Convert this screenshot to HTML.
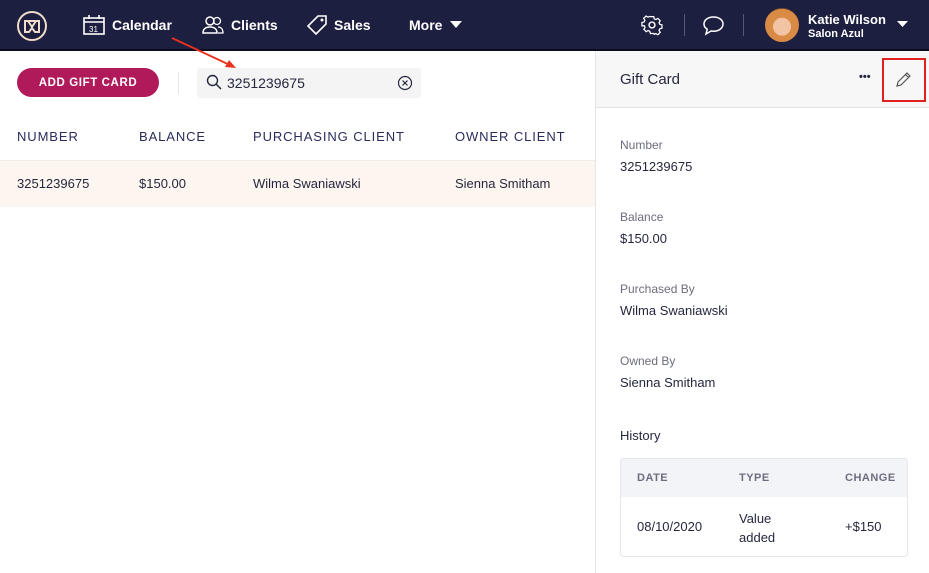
<!DOCTYPE html>
<html><head><meta charset="utf-8"><style>
*{box-sizing:border-box;margin:0;padding:0}
body{width:929px;height:573px;overflow:hidden;background:#fff;font-family:"Liberation Sans",sans-serif;color:#25273e;position:relative}
.nav{position:absolute;left:0;top:0;width:929px;height:51px;background:#1d1f40;border-bottom:2px solid #0c0d1c}
.nav .t{position:absolute;color:#fff;font-size:14px;font-weight:bold;top:17px}
.abs{position:absolute}
.hdr{position:absolute;top:129px;font-size:13px;letter-spacing:.9px;color:#2a2c5a}
.cell{position:absolute;top:176px;font-size:13px;color:#25273e}
.lbl{position:absolute;left:620px;font-size:12px;color:#6b6d7c}
.val{position:absolute;left:620px;font-size:13px;color:#25273e}
</style></head><body>
<div class="nav">
 <svg class="abs" style="left:16px;top:10px" width="32" height="32" viewBox="0 0 32 32"><circle cx="16" cy="16" r="14" fill="none" stroke="#f0dcc8" stroke-width="2"/><path d="M9 11h14v11h-4l-3-4-3 4H9z M12 11l4 6 4-6" fill="none" stroke="#f0dcc8" stroke-width="2"/></svg>
 <svg class="abs" style="left:83px;top:15px" width="22" height="20" viewBox="0 0 22 20"><rect x="1" y="3" width="20" height="16" fill="none" stroke="#fff" stroke-width="1.6"/><line x1="1" y1="7" x2="21" y2="7" stroke="#fff" stroke-width="1.4"/><line x1="6" y1="0" x2="6" y2="4" stroke="#fff" stroke-width="1.6"/><line x1="16" y1="0" x2="16" y2="4" stroke="#fff" stroke-width="1.6"/><text x="6" y="17" font-size="8" fill="#fff" font-family="Liberation Sans">31</text></svg>
 <div class="t" style="left:112px">Calendar</div>
 <svg class="abs" style="left:202px;top:16px" width="22" height="18" viewBox="0 0 22 18"><circle cx="8" cy="5" r="4" fill="none" stroke="#fff" stroke-width="1.5"/><path d="M1 17c0-4 3-6 7-6s7 2 7 6z" fill="none" stroke="#fff" stroke-width="1.5"/><circle cx="15" cy="5" r="3.5" fill="none" stroke="#fff" stroke-width="1.3"/><path d="M16 11c3 0 5 2 5 6h-5" fill="none" stroke="#fff" stroke-width="1.3"/></svg>
 <div class="t" style="left:231px">Clients</div>
 <svg class="abs" style="left:306px;top:14px" width="22" height="22" viewBox="0 0 22 22"><path d="M12 2h8v8L10 20 2 12z" fill="none" stroke="#fff" stroke-width="1.6"/><circle cx="16" cy="6" r="1.5" fill="#fff"/></svg>
 <div class="t" style="left:334px">Sales</div>
 <div class="t" style="left:409px">More</div>
 <svg class="abs" style="left:450px;top:21px" width="12" height="8"><path d="M0 0h12L6 7z" fill="#fff"/></svg>
 <svg class="abs" style="left:641px;top:14px" width="22" height="22" viewBox="0 0 24 24"><circle cx="12" cy="12" r="3.2" fill="none" stroke="#fff" stroke-width="1.6"/><path d="M10 2h4l.6 2.6 2 .9 2.3-1.4 2.8 2.8-1.4 2.3.9 2 2.6.6v4l-2.6.6-.9 2 1.4 2.3-2.8 2.8-2.300-1.4-2 .9L14 22h-4l-.6-2.6-2-.9-2.3 1.4-2.8-2.8 1.4-2.3-.9-2L0 13v-4l2.6-.6.9-2-1.4-2.3 2.8-2.8 2.3 1.4 2-.9z" fill="none" stroke="#fff" stroke-width="1.5" transform="translate(1 1) scale(.92)"/></svg>
 <div class="abs" style="left:684px;top:14px;width:1px;height:22px;background:#555878"></div>
 <svg class="abs" style="left:702px;top:15px" width="23" height="21" viewBox="0 0 23 21"><path d="M11.5 2C6 2 2 5 2 9c0 2.2 1.2 4 3.2 5.2L4 19l5-3c.8.1 1.6.2 2.5.2 5.5 0 9.5-3.2 9.5-7.2S17 2 11.5 2z" fill="none" stroke="#fff" stroke-width="1.5"/></svg>
 <div class="abs" style="left:743px;top:14px;width:1px;height:22px;background:#555878"></div>
 <div class="abs" style="left:765px;top:8px;width:34px;height:34px;border-radius:50%;background:radial-gradient(circle at 50% 55%,#f3c4a4 0 35%,#d98a45 36% 70%,#7a4a2a 71%)"></div>
 <div class="abs" style="left:808px;top:12px;color:#fff;font-size:13px;font-weight:bold">Katie Wilson</div>
 <div class="abs" style="left:808px;top:28px;color:#fff;font-size:11px;font-weight:bold">Salon Azul</div>
 <svg class="abs" style="left:897px;top:21px" width="11" height="7"><path d="M0 0h11L5.5 6z" fill="#fff"/></svg>
</div>

<div class="abs" style="left:17px;top:68px;width:142px;height:29px;border-radius:15px;background:#b01a5b;color:#fff;font-size:11.5px;font-weight:bold;letter-spacing:.6px;text-align:center;line-height:31px">ADD GIFT CARD</div>
<div class="abs" style="left:178px;top:72px;width:1px;height:22px;background:#e6e6e6"></div>
<div class="abs" style="left:197px;top:68px;width:224px;height:30px;background:#f4f4f4;border-radius:3px"></div>
<svg class="abs" style="left:206px;top:74px" width="16" height="16" viewBox="0 0 16 16"><circle cx="6.5" cy="6.5" r="5" fill="none" stroke="#25273e" stroke-width="1.4"/><line x1="10" y1="10" x2="15" y2="15" stroke="#25273e" stroke-width="1.5"/></svg>
<div class="abs" style="left:227px;top:75px;font-size:14px;color:#25273e">3251239675</div>
<svg class="abs" style="left:397px;top:75px" width="16" height="16" viewBox="0 0 16 16"><circle cx="8" cy="8" r="6.5" fill="none" stroke="#25273e" stroke-width="1.2"/><path d="M5.5 5.5l5 5M10.5 5.5l-5 5" stroke="#25273e" stroke-width="1.2"/></svg>
<svg class="abs" style="left:170px;top:36px" width="70" height="36"><line x1="2" y1="2" x2="62" y2="30" stroke="#e8321e" stroke-width="1.8"/><path d="M66 32l-11 -1 4-7z" fill="#e8321e"/></svg>

<div class="hdr" style="left:17px">NUMBER</div>
<div class="hdr" style="left:139px">BALANCE</div>
<div class="hdr" style="left:253px">PURCHASING CLIENT</div>
<div class="hdr" style="left:455px">OWNER CLIENT</div>
<div class="abs" style="left:0;top:160px;width:596px;height:47px;background:#fdf6f0;border-top:1px solid #f2ece6"></div>
<div class="cell" style="left:17px">3251239675</div>
<div class="cell" style="left:139px">$150.00</div>
<div class="cell" style="left:253px">Wilma Swaniawski</div>
<div class="cell" style="left:455px">Sienna Smitham</div>

<div class="abs" style="left:595px;top:51px;width:1px;height:522px;background:#e4e4e4"></div>
<div class="abs" style="left:596px;top:51px;width:333px;height:57px;background:#f7f7f7;border-bottom:1px solid #e4e4e4"></div>
<div class="abs" style="left:620px;top:71px;font-size:15px;color:#25273e">Gift Card</div>
<div class="abs" style="left:859px;top:71px;font-size:11px;font-weight:bold;letter-spacing:0px">•••</div>
<div class="abs" style="left:882px;top:58px;width:44px;height:44px;border:2px solid #e41f1f"></div>
<svg class="abs" style="left:895px;top:71px" width="17" height="17" viewBox="0 0 17 17"><path d="M12 2l3 3-9 9-4 1 1-4z M10.5 3.5l3 3" fill="none" stroke="#555" stroke-width="1.2"/></svg>

<div class="lbl" style="top:138px">Number</div><div class="val" style="top:159px">3251239675</div>
<div class="lbl" style="top:210px">Balance</div><div class="val" style="top:231px">$150.00</div>
<div class="lbl" style="top:282px">Purchased By</div><div class="val" style="top:303px">Wilma Swaniawski</div>
<div class="lbl" style="top:354px">Owned By</div><div class="val" style="top:375px">Sienna Smitham</div>
<div class="abs" style="left:620px;top:428px;font-size:13px;color:#25273e">History</div>
<div class="abs" style="left:620px;top:458px;width:288px;height:99px;border:1px solid #e6e6ea;border-radius:4px;overflow:hidden">
 <div style="height:38px;background:#f3f4f8"></div>
</div>
<div class="abs" style="left:637px;top:472px;font-size:11px;font-weight:bold;color:#6c6e80;letter-spacing:.5px">DATE</div>
<div class="abs" style="left:739px;top:472px;font-size:11px;font-weight:bold;color:#6c6e80;letter-spacing:.5px">TYPE</div>
<div class="abs" style="left:845px;top:472px;font-size:11px;font-weight:bold;color:#6c6e80;letter-spacing:.5px">CHANGE</div>
<div class="abs" style="left:637px;top:519px;font-size:13px">08/10/2020</div>
<div class="abs" style="left:739px;top:509px;font-size:13px;line-height:19px">Value<br>added</div>
<div class="abs" style="left:845px;top:519px;font-size:13px">+$150</div>
</body></html>
